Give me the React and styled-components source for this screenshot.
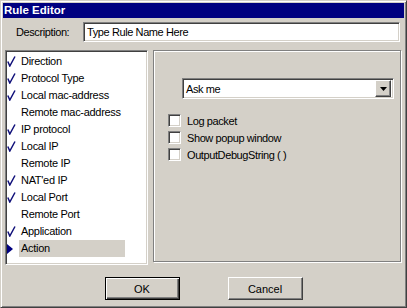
import React from 'react';
import styled, { createGlobalStyle } from 'styled-components';

const GlobalStyle = createGlobalStyle`
  html, body {
    margin: 0;
    padding: 0;
    background: #d4d0c8;
  }
  body {
    font-family: "Liberation Sans", Arial, sans-serif;
    font-size: 11px;
    color: #000;
  }
`;

const Window = styled.div`
  width: 407px;
  height: 308px;
  box-sizing: border-box;
  background: #d4d0c8;
  border: 1px solid;
  border-color: #d4d0c8 #404040 #404040 #d4d0c8;
  box-shadow: inset 1px 1px #fff, inset -1px -1px #808080;
  padding: 2px;
  display: flex;
  flex-direction: column;
`;

const TitleBar = styled.div`
  height: 15px;
  line-height: 15px;
  background: #000080;
  color: #fff;
  font-weight: bold;
  font-size: 11.5px;
  padding-left: 1px;
`;

const Body = styled.div`
  display: flex;
  flex-direction: column;
  padding: 0 3px 0 2px;
`;

const DescRow = styled.div`
  display: flex;
  align-items: center;
  margin-top: 4px;
  height: 20px;
`;

const Label = styled.span`
  width: 78px;
  box-sizing: border-box;
  padding-left: 11px;
  letter-spacing: -0.4px;
`;

const sunken = `
  border: 1px solid;
  border-color: #808080 #fff #fff #808080;
  box-shadow: inset 1px 1px #404040, inset -1px -1px #d4d0c8;
  background: #fff;
`;

const raised = `
  border: 1px solid;
  border-color: #fff #404040 #404040 #fff;
  box-shadow: inset -1px -1px #808080;
  background: #d4d0c8;
`;

const TextInput = styled.div`
  ${sunken}
  flex: 1;
  height: 20px;
  box-sizing: border-box;
  margin-right: 1px;
  padding: 2px 0 0 3px;
  line-height: 14px;
  letter-spacing: -0.4px;
`;

const Main = styled.div`
  display: flex;
  gap: 5px;
  margin-top: 8px;
  height: 215px;
`;

const List = styled.div`
  ${sunken}
  width: 143px;
  height: 215px;
  box-sizing: border-box;
  padding: 2px 0 0 1px;
`;

const Item = styled.div`
  display: flex;
  align-items: center;
  height: 17px;
`;

const Mark = styled.span`
  width: 14px;
  height: 17px;
  display: flex;
  align-items: center;
`;

const ItemText = styled.span`
  height: 17px;
  line-height: 17px;
  letter-spacing: -0.3px;
  margin-left: -2px;
  padding-left: 2px;
  width: ${p => (p.selected ? '104px' : 'auto')};
  background: ${p => (p.selected ? '#d4d0c8' : 'transparent')};
`;

const Panel = styled.div`
  width: 248px;
  height: 212px;
  box-sizing: border-box;
  border: 1px solid #808080;
  box-shadow: 1px 1px 0 #fff, inset 1px 1px 0 #fff;
  padding: 27px 0 0 14px;
`;

const Combo = styled.div`
  ${sunken}
  width: 212px;
  height: 21px;
  box-sizing: border-box;
  margin-left: 14px;
  display: flex;
  align-items: center;
  padding: 2px;
  letter-spacing: -0.4px;
`;

const ComboText = styled.span`
  flex: 1;
  padding-left: 1px;
`;

const DropButton = styled.span`
  ${raised}
  width: 16px;
  height: 17px;
  box-sizing: border-box;
  display: flex;
  align-items: center;
  justify-content: center;
`;

const Options = styled.div`
  margin-top: 13px;
  display: flex;
  flex-direction: column;
`;

const CheckRow = styled.label`
  display: flex;
  align-items: center;
  height: 17px;
  gap: 6px;
  letter-spacing: -0.4px;
`;

const Box = styled.span`
  ${sunken}
  width: 13px;
  height: 13px;
  box-sizing: border-box;
`;

const Buttons = styled.div`
  display: flex;
  justify-content: center;
  gap: 48px;
  margin-top: 12px;
  padding-left: 1px;
`;

const Button = styled.button`
  ${raised}
  width: 75px;
  height: 23px;
  box-sizing: border-box;
  font-family: inherit;
  font-size: 11px;
  color: #000;
  padding: 0;
  ${p =>
    p.primary &&
    `
    border: 1px solid #000;
    box-shadow: inset 1px 1px #fff, inset -1px -1px #404040, inset -2px -2px #808080;
  `}
`;

const Check = () => (
  <svg width="9" height="11" viewBox="0 0 9 11">
    <path d="M0.8 5.5 L2.8 10 L8 0.5" fill="none" stroke="#10107a" strokeWidth="1.5" />
  </svg>
);

const Arrow = () => (
  <svg width="6" height="10" viewBox="0 0 6 10">
    <path d="M0 0 L6 5 L0 10 Z" fill="#000080" />
  </svg>
);

const rules = [
  { name: 'Direction', on: true },
  { name: 'Protocol Type', on: true },
  { name: 'Local mac-address', on: true },
  { name: 'Remote mac-address', on: false },
  { name: 'IP protocol', on: true },
  { name: 'Local IP', on: true },
  { name: 'Remote IP', on: false },
  { name: "NAT'ed IP", on: true },
  { name: 'Local Port', on: true },
  { name: 'Remote Port', on: false },
  { name: 'Application', on: true },
  { name: 'Action', on: false, selected: true },
];

const options = ['Log packet', 'Show popup window', 'OutputDebugString ( )'];

export default function App() {
  return (
    <>
      <GlobalStyle />
      <Window>
        <TitleBar>Rule Editor</TitleBar>
        <Body>
          <DescRow>
            <Label>Description:</Label>
            <TextInput>Type Rule Name Here</TextInput>
          </DescRow>
          <Main>
            <List>
              {rules.map(r => (
                <Item key={r.name}>
                  <Mark>{r.selected ? <Arrow /> : r.on ? <Check /> : null}</Mark>
                  <ItemText selected={r.selected}>{r.name}</ItemText>
                </Item>
              ))}
            </List>
            <Panel>
              <Combo>
                <ComboText>Ask me</ComboText>
                <DropButton>
                  <svg width="7" height="4" viewBox="0 0 7 4">
                    <path d="M0 0 H7 L3.5 4 Z" fill="#000" />
                  </svg>
                </DropButton>
              </Combo>
              <Options>
                {options.map(o => (
                  <CheckRow key={o}>
                    <Box />
                    {o}
                  </CheckRow>
                ))}
              </Options>
            </Panel>
          </Main>
          <Buttons>
            <Button primary>OK</Button>
            <Button>Cancel</Button>
          </Buttons>
        </Body>
      </Window>
    </>
  );
}
